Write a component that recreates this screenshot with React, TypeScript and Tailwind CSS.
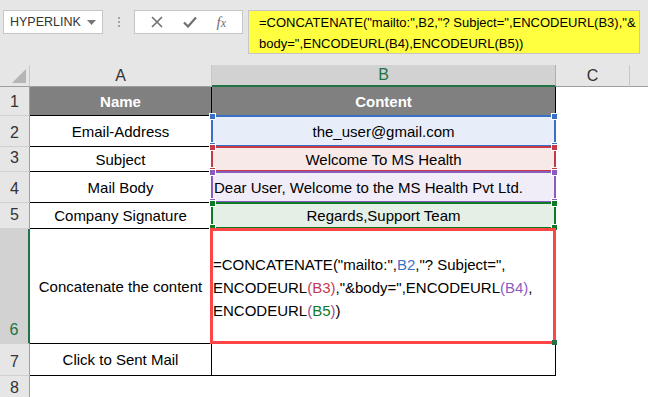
import React from "react";

const F = { fontFamily: '"Liberation Sans", Arial, sans-serif' };

function Corners({ color }: { color: string }) {
  const sq = "absolute w-[7px] h-[7px] border border-white";
  return (
    <>
      <div className={`${sq} -left-[4px] -top-[4px]`} style={{ background: color }} />
      <div className={`${sq} -right-[4px] -top-[4px]`} style={{ background: color }} />
      <div className={`${sq} -left-[4px] -bottom-[4px]`} style={{ background: color }} />
      <div className={`${sq} -right-[4px] -bottom-[4px]`} style={{ background: color }} />
    </>
  );
}

function RangeCell({
  color,
  fill,
  z,
  children,
  left,
}: {
  color: string;
  fill: string;
  z: string;
  children: React.ReactNode;
  left?: boolean;
}) {
  return (
    <div className={`relative border-r border-b border-black flex items-center pt-[2px] text-[15px] text-black ${left ? "justify-start pl-[2px]" : "justify-center"} ${z}`} style={{ background: fill }}>
      <span className="relative z-10">{children}</span>
      <div className="absolute -left-[1px] -top-[1px] -right-[1px] -bottom-[1px] border-2 pointer-events-none" style={{ borderColor: color }}>
        <Corners color={color} />
      </div>
    </div>
  );
}

const rowHead = "bg-[#e6e6e6] border-r border-[#9e9e9e] border-b border-b-[#d0d0d0] flex items-end justify-center pb-[1px] text-[16px] text-[#333]";
const aCell = "border-r border-b border-black flex items-center justify-center pt-[2px] text-[15px] text-black bg-white";

export default function App() {
  return (
    <div className="w-[648px] h-[397px] overflow-hidden bg-white flex flex-col" style={F}>
      {/* Top bar */}
      <div className="h-[65px] bg-[#e6e6e6] flex items-start pt-[10px] pl-[3px] shrink-0">
        <div className="w-[100px] h-[24px] bg-white border border-[#c6c6c6] flex items-center pl-[6px] pr-[6px] justify-between">
          <span className="text-[12.5px] text-[#333]">HYPERLINK</span>
          <svg width="9" height="5" viewBox="0 0 9 5"><path d="M0 0h9L4.5 5z" fill="#777" /></svg>
        </div>
        <div className="w-[31px] h-[24px] flex flex-col items-center justify-center gap-[2px]">
          <div className="w-[2px] h-[2px] bg-[#a5a5a5]" />
          <div className="w-[2px] h-[2px] bg-[#a5a5a5]" />
          <div className="w-[2px] h-[2px] bg-[#a5a5a5]" />
        </div>
        <div className="w-[109px] h-[24px] bg-white border border-[#c6c6c6] flex items-center justify-around px-[6px]">
          <svg width="12" height="12" viewBox="0 0 12 12"><path d="M1 1l10 10M11 1L1 11" stroke="#707070" strokeWidth="1.6" /></svg>
          <svg width="14" height="12" viewBox="0 0 14 12"><path d="M1 6.5l4 4L13 1.5" stroke="#707070" strokeWidth="2.2" fill="none" /></svg>
          <span className="text-[15px] text-[#707070] italic" style={{ fontFamily: '"Liberation Serif", serif' }}>f<span className="text-[12px]">x</span></span>
        </div>
        <div className="ml-[5px] w-[392px] h-[44px] bg-[#ffff40] border border-[#c6c6c6] pl-[10px] pt-[1px] text-[13px] leading-[21px] text-black whitespace-nowrap">
          =CONCATENATE("mailto:",B2,"? Subject=",ENCODEURL(B3),"&amp;
          <br />
          body=",ENCODEURL(B4),ENCODEURL(B5))
        </div>
      </div>

      {/* Sheet grid */}
      <div className="grid flex-1 grid-cols-[30px_182px_344px_74px_1fr] grid-rows-[22px_29px_31px_25px_31px_26px_115px_32px_1fr]">
        {/* column headers */}
        <div className="bg-[#e6e6e6] border-r border-[#c8c8c8] border-b border-b-[#9e9e9e] relative">
          <svg className="absolute right-[3px] bottom-[3px]" width="14" height="14" viewBox="0 0 14 14"><path d="M14 0v14H0z" fill="#b5b5b5" /></svg>
        </div>
        <div className="bg-[#e6e6e6] border-r border-[#c8c8c8] border-b border-b-[#9e9e9e] flex items-center justify-center text-[16px] text-[#333]">A</div>
        <div className="bg-[#d2d2d2] border-r border-[#b0b0b0] border-b-2 border-b-[#217346] flex items-center justify-center text-[16px] text-[#217346]">B</div>
        <div className="bg-[#e6e6e6] border-r border-[#c8c8c8] border-b border-b-[#9e9e9e] flex items-center justify-center text-[16px] text-[#333]">C</div>
        <div className="bg-[#e6e6e6] border-b border-b-[#9e9e9e]" />

        {/* row 1 */}
        <div className={rowHead}>1</div>
        <div className="bg-[#808080] border-r border-b border-black flex items-center justify-center pt-[2px] text-[15px] font-bold text-white">Name</div>
        <div className="bg-[#808080] border-r border-b border-black flex items-center justify-center pt-[2px] text-[15px] font-bold text-white">Content</div>
        <div />
        <div />

        {/* row 2 */}
        <div className={rowHead}>2</div>
        <div className={aCell}>Email-Address</div>
        <RangeCell color="#3a6fc6" fill="#e8eef9" z="z-[1]">the_user@gmail.com</RangeCell>
        <div />
        <div />

        {/* row 3 */}
        <div className={rowHead}>3</div>
        <div className={aCell}>Subject</div>
        <RangeCell color="#c43a45" fill="#f8e9e9" z="z-[2]">Welcome To MS Health</RangeCell>
        <div />
        <div />

        {/* row 4 */}
        <div className={rowHead}>4</div>
        <div className={aCell}>Mail Body</div>
        <RangeCell color="#8a5cbf" fill="#f1edf8" z="z-[3]" left>Dear User, Welcome to the MS Health Pvt Ltd.</RangeCell>
        <div />
        <div />

        {/* row 5 */}
        <div className={rowHead}>5</div>
        <div className={aCell}>Company Signature</div>
        <RangeCell color="#0f7a25" fill="#e4efe6" z="z-[4]">Regards,Support Team</RangeCell>
        <div />
        <div />

        {/* row 6 */}
        <div className="bg-[#d2d2d2] border-r-2 border-[#217346] border-b border-b-[#d0d0d0] flex items-end justify-center pb-[1px] text-[16px] text-[#217346]">6</div>
        <div className={aCell}>Concatenate the content</div>
        <div className="relative z-[5] border-r border-b border-black bg-white flex items-center pt-[2px] text-[15px] leading-[23px] text-black whitespace-nowrap">
          <div className="absolute -left-[2px] -top-[1px] -right-[1px] -bottom-[1px] border-[3px] border-[#ff4545]">
            <div className="absolute -right-[4px] -bottom-[4px] w-[5px] h-[5px] bg-[#217346]" />
          </div>
          <div className="relative pl-[1px]">
            =CONCATENATE("mailto:",<span className="text-[#3a6fc6]">B2</span>,"? Subject=",
            <br />
            ENCODEURL<span className="text-[#c43a55]">(B3)</span>,"&amp;body=",ENCODEURL<span className="text-[#8a5cbf]">(B4)</span>,
            <br />
            ENCODEURL<span className="text-[#a04b96]">(</span><span className="text-[#0f7a25]">B5</span><span className="text-[#a04b96]">)</span>)
          </div>
        </div>
        <div />
        <div />

        {/* row 7 */}
        <div className={rowHead}>7</div>
        <div className={aCell}>Click to Sent Mail</div>
        <div className="border-r border-b border-black bg-white" />
        <div />
        <div />

        {/* row 8 */}
        <div className={rowHead}>8</div>
        <div />
        <div />
        <div />
        <div />
      </div>
    </div>
  );
}
